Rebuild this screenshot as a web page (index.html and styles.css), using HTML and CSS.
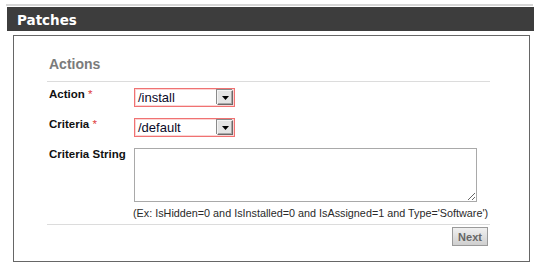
FILE: index.html
```html
<!DOCTYPE html>
<html>
<head>
<meta charset="utf-8">
<link rel="stylesheet" href="styles.css">
</head>
<body>
<div class="page">
  <div class="topline"></div>
  <div class="titlebar">Patches</div>
  <div class="panel">
    <div class="section">
      <h2 class="heading">Actions</h2>
      <div class="form">
        <div class="label">Action <span class="req">*</span></div>
        <div class="field">
          <div class="select"><span class="value">/install</span><span class="dropbtn"><svg width="7" height="4" viewBox="0 0 7 4"><path d="M0 0H7L3.5 4Z" fill="#000"/></svg></span></div>
        </div>
        <div class="label">Criteria <span class="req">*</span></div>
        <div class="field">
          <div class="select"><span class="value">/default</span><span class="dropbtn"><svg width="7" height="4" viewBox="0 0 7 4"><path d="M0 0H7L3.5 4Z" fill="#000"/></svg></span></div>
        </div>
        <div class="label">Criteria String</div>
        <div class="field">
          <textarea class="textarea"></textarea>
          <div class="hint">(Ex: IsHidden=0 and IsInstalled=0 and IsAssigned=1 and Type='Software')</div>
        </div>
      </div>
      <div class="actions">
        <button class="btn">Next</button>
      </div>
    </div>
  </div>
</div>
</body>
</html>
```
FILE: styles.css
```css
html, body {
  margin: 0;
  padding: 0;
  background: #fff;
}
body {
  font-family: "Liberation Sans", Arial, sans-serif;
}
.page {
  margin: 4px 4px 0 6px;
}
.topline {
  height: 2px;
  background: #d6d6d6;
  margin-right: 1px;
}
.titlebar {
  margin: 1px 0 0 1px;
  height: 24px;
  box-sizing: border-box;
  padding: 2px 0 0 10px;
  background: #3d3d3d;
  color: #fff;
  font-family: "DejaVu Sans", Verdana, sans-serif;
  font-weight: bold;
  font-size: 13.5px;
  line-height: 22px;
}
.panel {
  margin: 4px 4px 0 7px;
  border: 1px solid #666;
  padding: 20px 39px 15px 33px;
}
.heading {
  margin: 0;
  padding: 0 0 9px 2px;
  font-size: 14px;
  line-height: 16px;
  font-weight: bold;
  color: #7b7b7b;
  border-bottom: 1px solid #dcdcdc;
}
.form {
  display: grid;
  grid-template-columns: 87px 1fr;
  row-gap: 11px;
  padding-top: 6px;
  padding-bottom: 4px;
  border-bottom: 1px solid #dcdcdc;
}
.label {
  padding-left: 2px;
  font-size: 11.5px;
  line-height: 13px;
  font-weight: bold;
  color: #111;
}
.req {
  color: #e03c3c;
  font-weight: normal;
}
.field {
  display: flex;
  flex-direction: column;
  align-items: flex-start;
}
.select {
  width: 101px;
  height: 19px;
  box-sizing: border-box;
  border: 1px solid #f07272;
  box-shadow: inset 0 0 0 1px #fbd4d4;
  display: flex;
  align-items: center;
  justify-content: space-between;
  padding: 0 1px 0 3px;
  background: #fff;
}
.value {
  font-size: 13px;
  color: #0a0a2a;
  line-height: 15px;
}
.dropbtn {
  width: 16px;
  height: 15px;
  box-sizing: border-box;
  background: #e4e4e4;
  border-top: 1px solid #f4f4f4;
  border-left: 1px solid #f4f4f4;
  border-right: 1px solid #6a6a6a;
  border-bottom: 1px solid #6a6a6a;
  box-shadow: inset -1px -1px 0 #a8a8a8, -1px -1px 0 #8a8a8a;
  display: flex;
  align-items: center;
  justify-content: center;
}
.textarea {
  width: 343px;
  height: 54px;
  box-sizing: border-box;
  margin: 0;
  border: 1px solid #a9a9a9;
  padding: 2px;
  font-family: "Liberation Sans", Arial, sans-serif;
  font-size: 12px;
  resize: both;
}
.hint {
  margin-top: 5px;
  margin-left: -1px;
  font-size: 10.8px;
  line-height: 13px;
  color: #2a2a2a;
  white-space: nowrap;
}
.actions {
  display: flex;
  justify-content: flex-end;
  padding: 2px 2px 0 0;
}
.btn {
  width: 36px;
  height: 19px;
  margin: 0;
  padding: 0;
  border: 1px solid #9a9a9a;
  background: linear-gradient(#f0f0f0, #cfcfcf);
  font-family: "Liberation Sans", Arial, sans-serif;
  font-size: 11px;
  font-weight: bold;
  color: #666;
}
```
